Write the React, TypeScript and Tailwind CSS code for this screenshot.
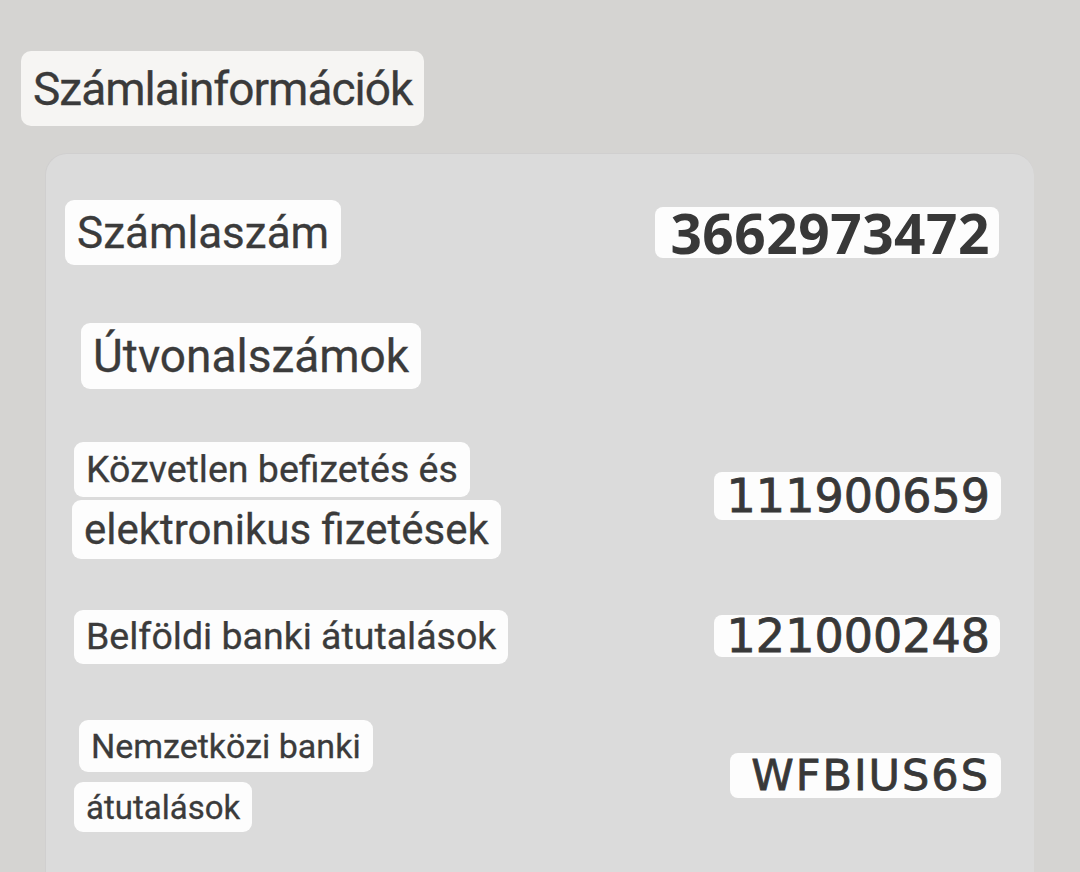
const label =
  "inline-flex items-center px-3 rounded-[9px] bg-[#fdfdfd] text-[#3b3b3b] leading-none whitespace-nowrap shrink-0 [-webkit-text-stroke:0.3px_#3b3b3b]";
const value =
  "inline-flex items-center rounded-[8px] bg-[#fdfdfd] text-[#383838] leading-none whitespace-nowrap shrink-0 font-['DejaVu_Sans',sans-serif]";

export default function App() {
  return (
    <div className="w-[1080px] h-[872px] overflow-hidden bg-[#d5d4d2] font-['Roboto',sans-serif] flex flex-col items-start">
      <div className="mt-[51px] ml-[21px] shrink-0 inline-flex items-center h-[75px] px-3 rounded-[10px] bg-[#f6f5f3] text-[#3a3a3a] text-[46px] tracking-[-1px] leading-none [-webkit-text-stroke:0.3px_#3a3a3a]">
        Számlainformációk
      </div>

      <div className="ml-[45px] mt-[27px] w-[989px] h-[740px] shrink-0 rounded-t-[22px] bg-[#dbdbdb] border-l border-t border-[#d0cfcf] pl-[19px] pr-[33px] pt-[46px]">
        {/* account number */}
        <div className="flex justify-between items-start">
          <span className={`${label} h-[65px] text-[44px]`}>Számlaszám</span>
          <span className={`${value} mt-[7px] mr-[2px] h-[51px] pl-[15px] pr-[9px] text-[55px] font-bold tracking-[0.5px] font-['Noto_Sans',sans-serif]`}>
            3662973472
          </span>
        </div>

        {/* routing */}
        <div className="mt-[58px] flex">
          <span className={`${label} ml-[16px] h-[66px] text-[46px]`}>Útvonalszámok</span>
        </div>

        <div className="mt-[53px] flex justify-between items-start">
          <div className="flex flex-col items-start">
            <span className={`${label} ml-[9px] h-[55px] text-[37.5px]`}>Közvetlen befizetés és</span>
            <span className={`${label} ml-[7px] mt-[3px] h-[59px] text-[42px]`}>elektronikus fizetések</span>
          </div>
          <span className={`${value} mt-[30px] h-[48px] pl-[13px] pr-[11px] text-[46px] [-webkit-text-stroke:0.8px_#383838]`}>
            111900659
          </span>
        </div>

        <div className="mt-[51px] flex justify-between items-start">
          <span className={`${label} ml-[9px] h-[54px] text-[37.5px]`}>Belföldi banki átutalások</span>
          <span className={`${value} mt-[5px] mr-[1px] h-[42px] pl-[13px] pr-[10px] text-[46px] [-webkit-text-stroke:0.8px_#383838]`}>
            121000248
          </span>
        </div>

        <div className="mt-[56px] flex justify-between items-start">
          <div className="flex flex-col items-start">
            <span className={`${label} ml-[14px] h-[52px] text-[34px]`}>Nemzetközi banki</span>
            <span className={`${label} ml-[9px] mt-[10px] h-[50px] text-[33px]`}>átutalások</span>
          </div>
          <span className={`${value} mt-[33px] h-[45px] pl-[21px] pr-[11px] text-[43px] tracking-[2px] [-webkit-text-stroke:0.8px_#383838]`}>
            WFBIUS6S
          </span>
        </div>
      </div>
    </div>
  );
}
